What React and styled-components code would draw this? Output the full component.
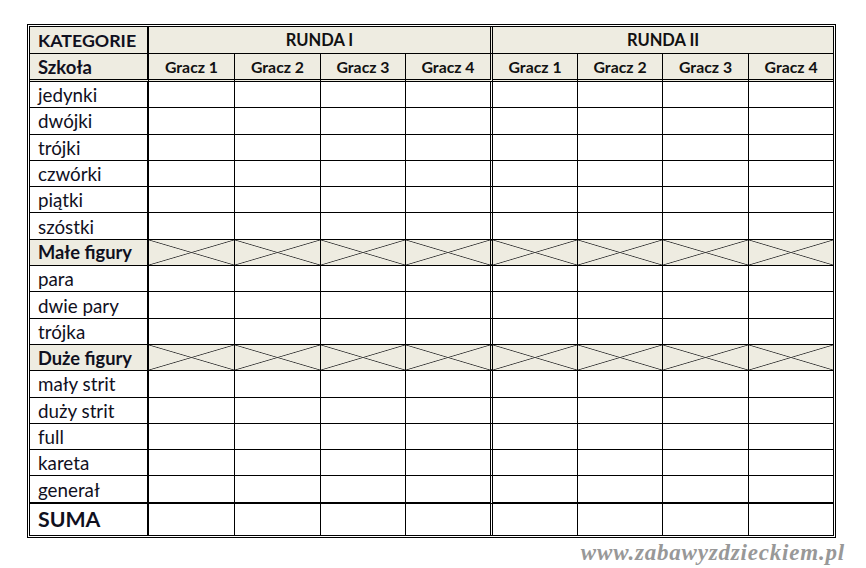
import React from 'react';
import styled, { createGlobalStyle, css } from 'styled-components';

const Global = createGlobalStyle`
  html, body { margin: 0; padding: 0; background: #fff; }
  body { font-family: Lato, "Open Sans", sans-serif; color: #111; }
`;

const Page = styled.div`
  width: 866px;
  height: 568px;
  box-sizing: border-box;
  padding: 24px 0 0 27px;
  overflow: hidden;
`;

const Sheet = styled.table`
  border-collapse: separate;
  border-spacing: 0;
  border: 3px double #000;
  table-layout: fixed;
  width: 809px;
`;

const Col = styled.col`
  width: ${p => p.$w}px;
`;

const Row = styled.tr`
  height: ${p => p.$h}px;
  & > td {
    border-bottom: ${p => p.$bottom || '1px solid #000'};
  }
`;

const beige = '#eeece1';

const Cell = styled.td`
  padding: 0;
  box-sizing: border-box;
  border-right: 1px solid #000;
  text-align: center;
  vertical-align: middle;
  white-space: nowrap;
  ${p => p.$split && css`border-right: 3px double #000;`}
  ${p => p.$last && css`border-right: none;`}
  ${p => p.$shade && css`background: ${beige};`}
  ${p => p.$hatch && css`
    background-color: ${beige};
    background-image:
      linear-gradient(to top right, transparent calc(50% - 0.8px), #3a3a3a 50%, transparent calc(50% + 0.8px)),
      linear-gradient(to bottom right, transparent calc(50% - 0.8px), #3a3a3a 50%, transparent calc(50% + 0.8px));
  `}
`;

const LabelCell = styled.td`
  padding: 0 0 0 8px;
  box-sizing: border-box;
  border-right: 2px solid #000;
  text-align: left;
  vertical-align: middle;
  white-space: nowrap;
  font-size: ${p => p.$size || 18.8}px;
  font-weight: ${p => (p.$bold ? 700 : 400)};
  color: #10101e;
  ${p => p.$shade && css`background: ${beige};`}
`;

const HeadText = styled.span`
  font-size: ${p => p.$size || 15.8}px;
  font-weight: 700;
  color: #111;
`;

const Watermark = styled.div`
  width: 845px;
  text-align: right;
  margin: 2px 0 0 -27px;
  font-family: "Liberation Serif", serif;
  font-style: italic;
  font-weight: 700;
  font-size: 23px;
  letter-spacing: 0.8px;
  color: #989898;
`;

const cols = [119, 86, 86, 85, 87, 85, 85, 86, 84];

const rows = [
  { label: 'jedynki' },
  { label: 'dwójki' },
  { label: 'trójki' },
  { label: 'czwórki' },
  { label: 'piątki' },
  { label: 'szóstki' },
  { label: 'Małe figury', hatch: true },
  { label: 'para' },
  { label: 'dwie pary' },
  { label: 'trójka' },
  { label: 'Duże figury', hatch: true },
  { label: 'mały strit' },
  { label: 'duży strit' },
  { label: 'full' },
  { label: 'kareta' },
  { label: 'generał' },
];

const players = ['Gracz 1', 'Gracz 2', 'Gracz 3', 'Gracz 4'];
const allPlayers = [...players, ...players];

function PlayerCells({ hatch }) {
  return allPlayers.map((_, i) => (
    <Cell key={i} $split={i === 3} $last={i === 7} $hatch={hatch} />
  ));
}

export default function App() {
  return (
    <Page>
      <Global />
      <Sheet>
        <colgroup>
          {cols.map((w, i) => <Col key={i} $w={w} />)}
        </colgroup>
        <tbody>
          <Row $h={27}>
            <LabelCell $bold $size={17.8} $shade>KATEGORIE</LabelCell>
            <Cell colSpan={4} $split $shade><HeadText $size={16.5}>RUNDA I</HeadText></Cell>
            <Cell colSpan={4} $last $shade><HeadText $size={16.5}>RUNDA II</HeadText></Cell>
          </Row>
          <Row $h={28} $bottom="3px double #000">
            <LabelCell $bold $size={18.5} $shade>Szkoła</LabelCell>
            {allPlayers.map((p, i) => (
              <Cell key={i} $split={i === 3} $last={i === 7} $shade>
                <HeadText>{p}</HeadText>
              </Cell>
            ))}
          </Row>
          {rows.map((r, i) => (
            <Row
              key={r.label}
              $h={i === rows.length - 1 ? 27.3 : 26.3}
              $bottom={i === rows.length - 1 ? '2px solid #000' : undefined}
            >
              <LabelCell $bold={r.hatch} $size={r.hatch ? 18.3 : undefined} $shade={r.hatch}>
                {r.label}
              </LabelCell>
              <PlayerCells hatch={r.hatch} />
            </Row>
          ))}
          <Row $h={31} $bottom="none">
            <LabelCell $bold $size={21.3}>SUMA</LabelCell>
            <PlayerCells />
          </Row>
        </tbody>
      </Sheet>
      <Watermark>www.zabawyzdzieckiem.pl</Watermark>
    </Page>
  );
}
